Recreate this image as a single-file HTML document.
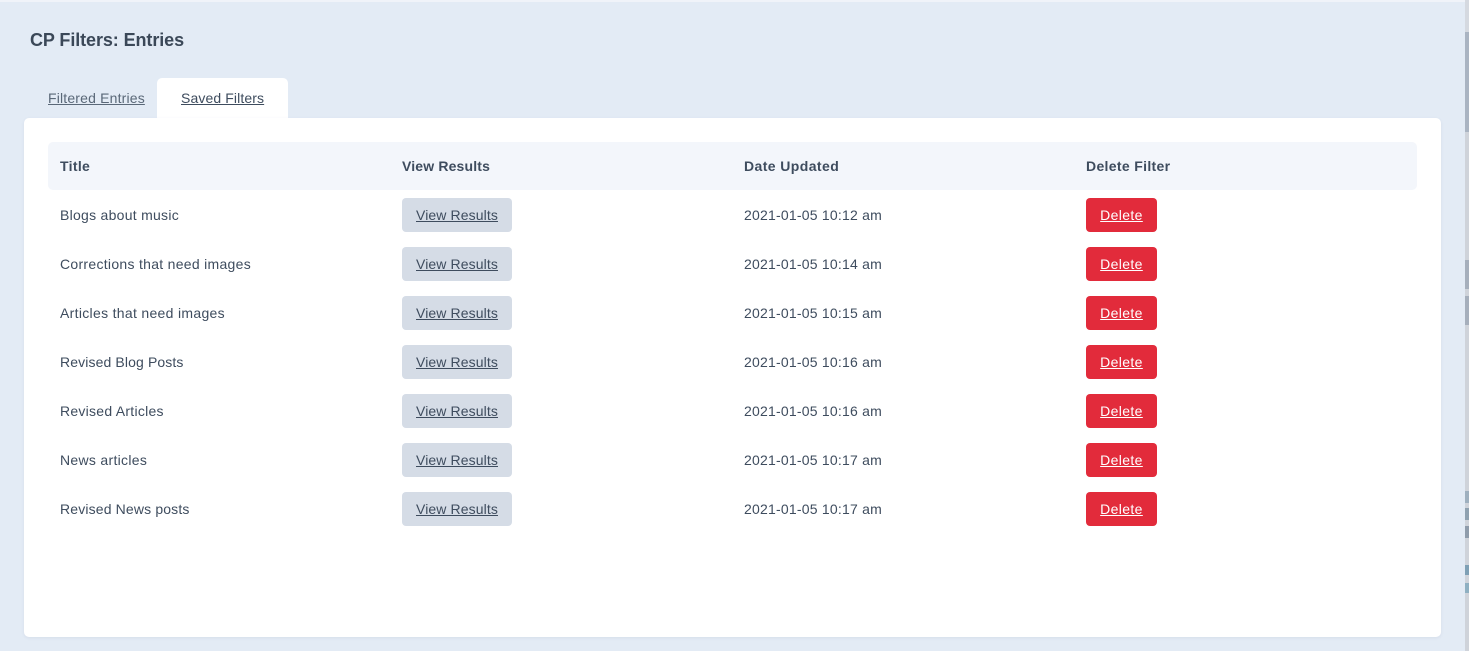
<!DOCTYPE html>
<html><head><meta charset="utf-8"><style>
html,body{margin:0;padding:0;width:1469px;height:651px;overflow:hidden;background:#e3ebf5}
body{position:relative;font-family:"Liberation Sans",sans-serif;color:#3e4c5e;font-size:14px}
div,a{position:absolute;white-space:nowrap}
.top{left:0;top:0;width:1465px;height:2px;background:#f0f3f9}
h1{position:absolute;margin:0;left:30px;top:30px;font-size:18px;line-height:20px;font-weight:700;color:#3b4858;letter-spacing:-.09px}
.card{left:24px;top:118px;width:1417px;height:519px;background:#fff;border-radius:5px;box-shadow:0 1px 3px rgba(60,80,120,.08)}
.tabon{left:157px;top:78px;width:131px;height:40px;background:#fff;border-radius:5px 5px 0 0}
.t{line-height:20px;height:20px}
.th{left:48px;top:142px;width:1369px;height:48px;background:#f3f6fb;border-radius:5px}
.b{font-weight:700;color:#3e4c5e;top:156px;letter-spacing:.33px}
.view{left:402px;width:110px;height:34px;line-height:34px;text-align:center;background:#d5dce6;border-radius:4px;color:#3e4c5e;text-decoration:underline;letter-spacing:.11px}
.del{left:1086px;width:71px;height:34px;line-height:34px;text-align:center;background:#e22b3b;border-radius:4px;color:#fff;text-decoration:underline;letter-spacing:.36px}
.name{left:60px;letter-spacing:.27px}
.date{left:744px;letter-spacing:.22px}
.sb{left:1465px;width:4px}
</style></head><body>
<div class="top"></div>
<h1>CP Filters: Entries</h1>
<a class="t" style="left:48px;top:88px;color:#5a6878;text-decoration:underline;letter-spacing:.17px">Filtered Entries</a>
<div class="tabon"></div>
<a class="t" style="left:181px;top:88px;color:#3e4c5e;text-decoration:underline;letter-spacing:.11px">Saved Filters</a>
<div class="card"></div>
<div class="th"></div>
<div class="t b" style="left:60px">Title</div>
<div class="t b" style="left:402px;letter-spacing:.16px">View Results</div>
<div class="t b" style="left:744px;letter-spacing:.41px">Date Updated</div>
<div class="t b" style="left:1086px">Delete Filter</div>

<div class="t name" style="top:205px">Blogs about music</div>
<a class="view" style="top:198px">View Results</a>
<div class="t date" style="top:205px">2021-01-05 10:12 am</div>
<a class="del" style="top:198px">Delete</a>

<div class="t name" style="top:254px;letter-spacing:.29px">Corrections that need images</div>
<a class="view" style="top:247px">View Results</a>
<div class="t date" style="top:254px">2021-01-05 10:14 am</div>
<a class="del" style="top:247px">Delete</a>

<div class="t name" style="top:303px;letter-spacing:.31px">Articles that need images</div>
<a class="view" style="top:296px">View Results</a>
<div class="t date" style="top:303px">2021-01-05 10:15 am</div>
<a class="del" style="top:296px">Delete</a>

<div class="t name" style="top:352px;letter-spacing:.12px">Revised Blog Posts</div>
<a class="view" style="top:345px">View Results</a>
<div class="t date" style="top:352px">2021-01-05 10:16 am</div>
<a class="del" style="top:345px">Delete</a>

<div class="t name" style="top:401px;letter-spacing:.26px">Revised Articles</div>
<a class="view" style="top:394px">View Results</a>
<div class="t date" style="top:401px">2021-01-05 10:16 am</div>
<a class="del" style="top:394px">Delete</a>

<div class="t name" style="top:450px;letter-spacing:.3px">News articles</div>
<a class="view" style="top:443px">View Results</a>
<div class="t date" style="top:450px">2021-01-05 10:17 am</div>
<a class="del" style="top:443px">Delete</a>

<div class="t name" style="top:499px;letter-spacing:.15px">Revised News posts</div>
<a class="view" style="top:492px">View Results</a>
<div class="t date" style="top:499px">2021-01-05 10:17 am</div>
<a class="del" style="top:492px">Delete</a>

<div class="sb" style="top:0;height:651px;background:#cfd3da"></div>
<div class="sb" style="top:0;height:32px;background:#d5d9e0"></div>
<div class="sb" style="top:32px;height:100px;background:#aab4c2"></div>
<div class="sb" style="top:260px;height:29px;background:#a6afbc"></div>
<div class="sb" style="top:296px;height:29px;background:#a6afbc"></div>
<div class="sb" style="top:491px;height:12px;background:#9fb0bf"></div>
<div class="sb" style="top:508px;height:12px;background:#8fa1b0"></div>
<div class="sb" style="top:526px;height:12px;background:#8f9cab"></div>
<div class="sb" style="top:565px;height:10px;background:#7fa0b5"></div>
<div class="sb" style="top:583px;height:10px;background:#8fb0c2"></div>
</body></html>
